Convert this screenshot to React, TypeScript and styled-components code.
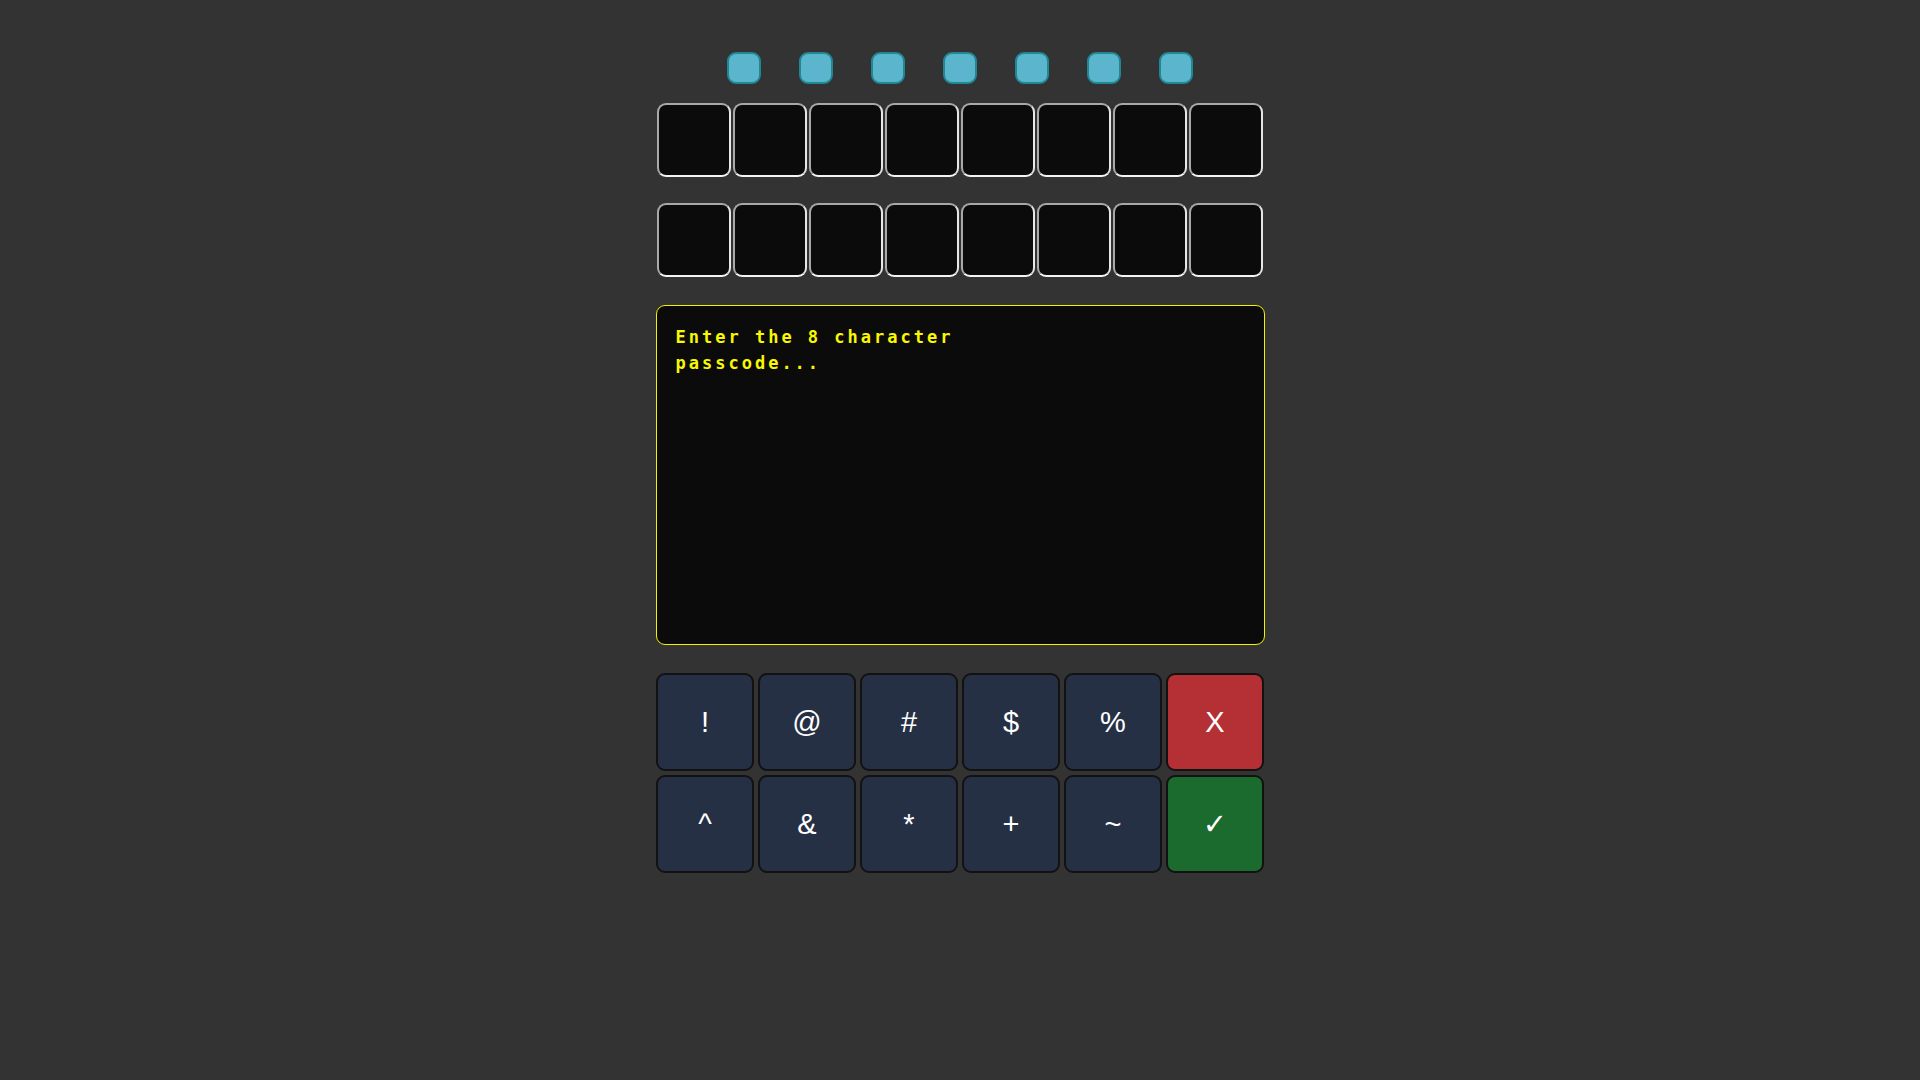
import React from "react";
import styled, { createGlobalStyle } from "styled-components";

const GlobalStyle = createGlobalStyle`
  html, body {
    margin: 0;
    padding: 0;
    background: #333333;
  }
  body {
    font-family: "Liberation Sans", Arial, sans-serif;
    min-height: 100vh;
  }
`;

const Page = styled.main`
  display: flex;
  flex-direction: column;
  align-items: center;
  padding-top: 52px;
  min-height: 100vh;
  box-sizing: border-box;
  background: #333333;
`;

const LightRow = styled.div`
  display: flex;
  gap: 38px;
`;

const Light = styled.div`
  width: 34px;
  height: 32px;
  box-sizing: border-box;
  border: 2px solid #1f8893;
  border-radius: 9px;
  background: #5ab5cd;
`;

const SlotRow = styled.div<{ $mt: number }>`
  display: flex;
  gap: 2px;
  margin-top: ${(p) => p.$mt}px;
`;

const Slot = styled.div`
  width: 74px;
  height: 74px;
  box-sizing: border-box;
  border: 2px solid;
  border-color: #a8a8a8 #e6e6e6 #f4f4f4 #a8a8a8;
  border-radius: 9px;
  background: #0c0b0b;
`;

const Screen = styled.div`
  margin-top: 28px;
  width: 609px;
  height: 340px;
  box-sizing: border-box;
  border: 1px solid #f2f200;
  border-radius: 9px;
  background: #0c0b0b;
  padding: 18px 19px;
`;

const Prompt = styled.p`
  margin: 0;
  max-width: 300px;
  font-family: "DejaVu Sans Mono", "Liberation Mono", monospace;
  font-weight: bold;
  font-size: 17px;
  letter-spacing: 3px;
  line-height: 26px;
  color: #f8f800;
`;

const Keypad = styled.div`
  margin-top: 28px;
  display: grid;
  grid-template-columns: repeat(6, 98px);
  grid-auto-rows: 98px;
  gap: 4px;
`;

const Key = styled.button<{ $tone: "plain" | "cancel" | "ok" }>`
  box-sizing: border-box;
  width: 98px;
  height: 98px;
  padding: 0;
  border: 2px solid #121212;
  border-radius: 9px;
  background: ${(p) =>
    p.$tone === "cancel" ? "#b53034" : p.$tone === "ok" ? "#1b6a2e" : "#263045"};
  color: #ffffff;
  font-family: "Liberation Sans", Arial, "DejaVu Sans", sans-serif;
  font-size: 29px;
  display: flex;
  align-items: center;
  justify-content: center;
  cursor: pointer;
`;

const keys: { label: string; tone: "plain" | "cancel" | "ok" }[] = [
  { label: "!", tone: "plain" },
  { label: "@", tone: "plain" },
  { label: "#", tone: "plain" },
  { label: "$", tone: "plain" },
  { label: "%", tone: "plain" },
  { label: "X", tone: "cancel" },
  { label: "^", tone: "plain" },
  { label: "&", tone: "plain" },
  { label: "*", tone: "plain" },
  { label: "+", tone: "plain" },
  { label: "~", tone: "plain" },
  { label: "\u2713", tone: "ok" },
];

export default function App() {
  return (
    <>
      <GlobalStyle />
      <Page>
        <LightRow>
          {Array.from({ length: 7 }).map((_, i) => (
            <Light key={i} />
          ))}
        </LightRow>
        <SlotRow $mt={19}>
          {Array.from({ length: 8 }).map((_, i) => (
            <Slot key={i} />
          ))}
        </SlotRow>
        <SlotRow $mt={26}>
          {Array.from({ length: 8 }).map((_, i) => (
            <Slot key={i} />
          ))}
        </SlotRow>
        <Screen>
          <Prompt>Enter the 8 character passcode...</Prompt>
        </Screen>
        <Keypad>
          {keys.map((k) => (
            <Key key={k.label} $tone={k.tone}>
              {k.label}
            </Key>
          ))}
        </Keypad>
      </Page>
    </>
  );
}
